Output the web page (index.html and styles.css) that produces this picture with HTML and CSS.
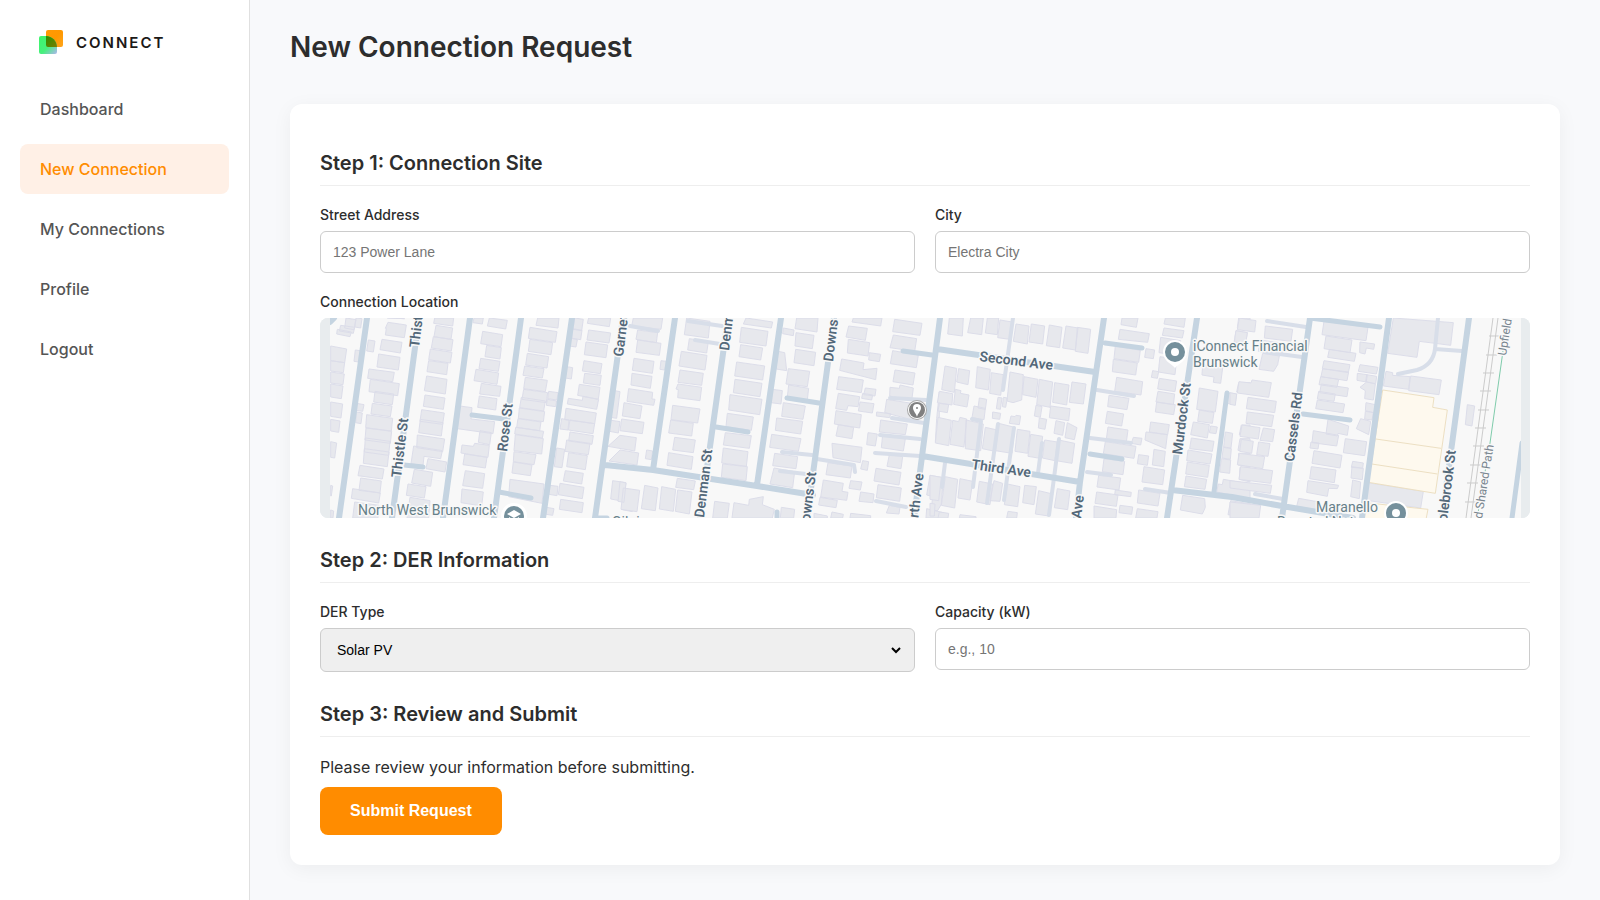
FILE: index.html
```html
<!DOCTYPE html>
<html lang="en">
<head>
<meta charset="utf-8">
<meta name="viewport" content="width=device-width, initial-scale=1">
<title>New Connection Request</title>
<link rel="stylesheet" href="styles.css">
</head>
<body>
<div class="layout">
  <aside class="sidebar">
    <a class="brand" href="#">
      <svg class="brand-mark" viewBox="0 0 24 24" aria-hidden="true">
        <defs>
          <linearGradient id="orange" x1="0" y1="0" x2="1" y2="1"><stop offset="0" stop-color="#ff9a05"/><stop offset=".5" stop-color="#ff9800"/><stop offset="1" stop-color="#ffa51c"/></linearGradient>
          <linearGradient id="green" x1="0" y1="0" x2="1" y2="1"><stop offset="0" stop-color="#3df56a"/><stop offset=".55" stop-color="#46f07c"/><stop offset="1" stop-color="#b0b5f0"/></linearGradient>
          <linearGradient id="overlap" x1="0" y1="0" x2="1" y2="1"><stop offset="0" stop-color="#2b8f00"/><stop offset="1" stop-color="#7a7d00"/></linearGradient>
        </defs>
        <rect x="7" y="0" width="17" height="17" rx="2" fill="url(#orange)"/>
        <path d="M2 6h5c6 0 11 5 11 11v5a2 2 0 0 1-2 2H2a2 2 0 0 1-2-2V8a2 2 0 0 1 2-2z" fill="url(#green)"/>
        <path d="M7 6c6 0 11 5 11 11H9a2 2 0 0 1-2-2z" fill="url(#overlap)"/>
      </svg>
      <span>CONNECT</span>
    </a>
    <nav class="nav">
      <a href="#">Dashboard</a>
      <a class="active" href="#" aria-current="page">New Connection</a>
      <a href="#">My Connections</a>
      <a href="#">Profile</a>
      <a href="#">Logout</a>
    </nav>
  </aside>

  <main class="main">
    <h1>New Connection Request</h1>
    <form class="card">
      <h2>Step 1: Connection Site</h2>
      <div class="row">
        <div class="field"><label for="street">Street Address</label><input id="street" type="text" placeholder="123 Power Lane"></div>
        <div class="field"><label for="city">City</label><input id="city" type="text" placeholder="Electra City"></div>
      </div>
      <div class="field location">
        <span class="label">Connection Location</span>
        <svg class="map" viewBox="0 0 1210 200" preserveAspectRatio="xMidYMid slice" role="img" aria-label="Map of the connection location">
          <rect class="edge" width="1210" height="200"/>
          <rect class="land" x="10" width="1191" height="200"/>

          <g class="building" transform="translate(-10 -8) scale(.33333)">
            <path d="M108 24l30 5-6 30-28-5zM138 24l18 2-4 28-18-3zM92 46l42 6-4 18-42-7zM82 58l42 8-4 14-40-8zM234 37l55 8-6 38-57-8 3-20h-3zM232 24l52 2zM216 88l60 9-5 32-61-10zM206 132l64 10-5 38-64-9zM175 90l20 3-5 33-20-3zM136 120l14 2-4 34-14-2zM62 108l48 9-6 41-42-6zM62 152l42 6-4 30-38-5zM62 186l41 6-4 32-37-5zM62 222l37 6-5 38-32-5zM62 276l36 6-5 42-31-5zM62 328l28 5-4 34-24-4zM62 395l18 4-6 45-12-2zM62 526l6 2-4 30h-2zM62 600l9 3-2 21h-7z"/>
            <path d="M177 177l76 10-5 28-75-10zM181 208l87 13-5 36-86-12zM195 244l56 8-4 32-56-8zM187 280l59 8-5 32-58-8zM170 314l78 11-4 38-77-10zM168 354l77 10-4 36-76-10zM166 384l74 10-4 42-73-10zM163 416l74 10-5 44-72-10zM150 466l72 11-5 30-73-10zM152 504l62 9-4 36-63-8zM128 536l83 13-5 30-82-14zM134 576l73 10-3 38h-76zM140 280l22 4-4 20-20-3zM139 306l18 3-4 32-16-3z"/>
            <path d="M374 24h57l-3 24-57-8zM378 46l50 8-5 34-51-8zM370 80l59 9-5 34-60-9zM361 117l65 10-5 32-65-10zM356 152l58 8-4 34-59-9zM350 198l61 10-5 44-63-10zM345 255l60 9-5 34-60-9zM335 299l68 10-5 34-68-9zM331 328l68 10-5 40-68-10zM322 375l82 12-6 38-78-12zM311 408l86 14-5 24-50-7-3 28-36-6zM354 446l56 10-5 30-57-10zM313 478l55 9-6 42-57-10zM294 522l54 8-5 34-54-8zM300 562l60 10-4 52h-65z"/>
            <path d="M492 24h28l-3 18-28-4zM538 24l54 7-5 26-55-9zM518 64l60 10-5 36-61-9zM530 106l44 7-4 34-45-7zM512 145l58 9-5 30-58-8zM498 178l68 11-5 34-69-11zM514 220l59 9-4 30-60-7zM508 258l53 8-4 34-54-8zM450 288l36 5-3 34 71 8-5 36-107-15zM510 362l34 6-5 36-34-7zM494 400l44 6-4 36-81-13 3-24 34 4zM464 432l67 10-5 32-67-10zM466 482l58 9-6 44-60-8zM456 537l64 9-5 42-62-10z"/>
            <path d="M683 24h64l-3 30-66-8zM660 52l81 13-5 32-81-12zM660 88l68 10-5 36-68-10zM652 130l64 10-5 34-64-9zM644 168l58 8-5 28-58-8zM646 202l66 9-6 34-65-9zM641 238l72 10-4 30-73-10zM634 262l72 11-5 30-72-10zM628 294l76 11-4 30-75-10zM624 326l69 10-4 26-69-10zM617 352l84 12-4 20-83-12zM616 374l84 12-5 46-83-10zM612 425l66 9-6 30-62-9zM610 456l56 9-5 32-55-8zM600 508l102 14-6 58-100-20zM794 24l26 4-5 34-26-4zM788 56l28 5-4 28-26-4zM780 84l22 5-4 22-20-3z"/>
            <path d="M716 244l28 4-3 22-28-4zM712 268l28 5-3 17-28-4zM836 24h66l-4 26-66-10zM836 60l66 9-5 30-66-9zM828 96l65 9-5 38-65-9zM822 152l54 9-5 30-54-8zM824 190l50 6-4 30-50-7zM808 223l62 9-5 36-62-12zM775 265l42 6 2-12 47 9-6 30-88-16zM768 295l91 14-5 32-90-12zM780 330l74 11-5 30-74-11zM780 366l70 11-4 26-70-10zM770 390l70 10-5 34-70-10zM776 428l56 9-6 42-56-9zM766 482l54 8-5 32-55-9zM750 520l72 12-5 34-72-12zM752 568l68 10-4 30-68-10zM770 170l18 3-4 34-18-3zM755 326l22 4-3 30-24-3zM740 414l24 4-8 55-23-3zM720 526l24 3-3 28-24-4zM710 592l22 4-4 20-20-3zM908 512l40 6-8 56-38-7zM940 542l35 8-8 55-30-6z"/>
          </g>

          <g class="building" transform="translate(300 -8) scale(.33333)">
            <path d="M40 24h88l-5 34-88-10zM53 60l60 8-4 30-61-10zM53 90l70 10-5 36-70-9zM42 145l60 9-5 36-60-9zM36 190l60 9-5 36-58-10zM26 236l72 11-2 20 9 1-4 18-80-12zM12 278l54 10-6 38-53-8zM5 327l67 10-5 34-67-9zM-28 240l28 5-10 80-24-4zM-32 330l32 5-5 34-32-6zM0 376l49 7-5 40-80-14zM0 420l56 9-5 36-84-12zM10 534l49 7-8 64-48-7zM0 515l18 4-6 58-18-3zM74 526l40 8-8 68-42-6zM125 530l42 8-7 66-42-7zM173 540l43 6-8 66-42-8zM172 505l54 8-5 26-54-7zM80 420l18 3-4 26-18-3zM123 152l16 2-5 26-14-2z"/>
            <path d="M200 24l70 10-5 50-72-10zM208 86l57 9-5 34-57-9zM184 124l77 12-6 44-78-12zM180 180l70 10-5 36-71-9zM174 222l71 10-5 40-67-9 2-24-7-2zM158 286l82 11-7 42-80-10zM152 330l68 10-5 38-69-9zM164 382l62 8-6 38-62-8zM146 428l73 12-5 38-73-12zM378 24l80 12-4 18-84-12zM364 52l80 12-6 44-79-11zM362 104l66 10-6 36-65-10zM350 156l84 12-6 42-84-12zM345 208l81 12-6 40-80-12zM330 254l96 14-7 46-93-14zM322 310l78 11-6 40-76-11zM316 368l78 9-6 38-78-10zM310 414l74 11-5 44-74-10zM308 462l74 8-4 42-74-10zM284 574l44 6-6 44h-44zM342 578l44 8 2-18 42-8-3 24 36 14-6 26H336z"/>
            <path d="M530 24h64l-3 42-66-10zM528 68l54 8-5 40-52-8zM527 118l60 9-5 40-60-9zM490 54l32 6-2 17-32-6zM474 124l20 4 6 54-32-5zM505 176l64 8-7 46-64-8zM506 225l60 10-4 34-60-8zM457 238l30 4-4 40-30-4zM490 278l66 10-7 40-64-9zM470 324l78 10-6 38-76-11zM455 373l88 13-8 38-86-12zM464 430l69 10-5 36-70-9zM462 474l62 11-6 48-68-11zM484 592l40 6-3 26h-40zM582 610l40 8v6h-40zM636 606l34 7-2 11h-36z"/>
            <path d="M700 24h86l-4 24-86-12zM686 48l56 7-6 36-58-10zM685 88l64 10-5 40-62-9zM748 128l34 5-4 22-32-5zM665 147l67 12-3 20 42-4-4 34-108-28zM656 200l74 10-6 38-74-10zM655 250l64 10-5 30-30-3-4 14-33-5zM736 234l32 4-3 20-34-4zM728 250l30 5-3 15-30-5zM720 276l42 5-5 28-42-6zM648 302l76 12-5 40-76-12zM655 344l46 8-5 34-48-8zM636 400l90 12-5 46-82-15zM624 458l72 10-5 36-73-10zM728 452l18 3-4 26-20-4zM744 368l28 4-6 36-26-4zM610 510l60 10-4 24 18 3-4 24-78-10zM600 562l52 9-4 22-52-8zM692 512l34 4-5 24-34-5zM722 546l40 6-3 26-42-4zM692 610l60 7v7h-62z"/>
            <path d="M824 28l82 12-6 36-82-11zM820 75l70 11-6 38-74-11zM818 122l77 13-6 38-78-12zM825 180l60 9-6 36-60-10zM810 232l28 3 2-10 40 9-5 38-66-14zM800 268l100 16-6 50-100-26zM782 330l80 12-6 32-78-8zM788 375l68 12-6 36-66-10zM808 434l40 6-5 36-42-7zM768 475l75 12-6 38-75-12zM774 524l70 10-5 40-70-11zM808 586l32 6-3 20-38-3zM930 496l40 7-6 80-12 20-18-4 4-40-18-4zM958 246v150h-12l4-70zM920 596l50 12v16h-52zM770 306l42 5-3 12-40-5z"/>
          </g>

          <g class="building" transform="translate(610 -8) scale(.33333)">
            <path d="M58 24h42l-3 54-44-6zM122 24h38l-5 50-42-6zM172 24h34l-4 50-36-5zM210 30l36 6-7 52-36-5zM258 42l39 6-5 54-42-8zM304 42l40 6-6 54-41-6zM358 45l38 7-7 61-40-6zM408 48l36 6-8 66-38-6zM442 52l40 6-8 72-38-6zM576 24h48l-5 28-46-8zM570 58l88 13-5 26-88-9zM556 108l75 13-5 36-74-11zM550 148l72 11-5 36-70-10zM560 202l78 13-5 40-79-11zM537 256l60 9-6 34-58-9zM532 304l49 8-6 36-49-8zM534 351l60 9-5 36-60-9zM526 395l92 14-6 36-92-14zM522 446l62 8-5 40-62-9zM506 496l66 8-5 36-66-9zM500 546l64 9-5 34-64-9zM492 588l68 11-2 25h-66zM556 540l48 7-2 13-48-6zM570 586l38 5-3 22-38-5zM622 596l62 9-3 19h-64z"/>
            <path d="M45 168l35 7-7 72-38-8zM86 176l33 6-5 42-34-8zM142 170l39 8-6 62-38-7zM184 188l36 6-8 62-33-6zM240 186l40 8-5 76-26 8-18-5zM282 200l42 8-6 54-40-8zM328 208l40 8-8 76-40-8zM374 218l43 7-7 60-42-8zM426 216l42 6-8 60-42-5zM28 244l40 7-2 34-44-7zM76 238l17 4-2 8 26 5-6 36-40-8zM28 280l28 4-4 24-28-5zM148 264l22 4-4 30-22-4zM132 288l34 7-4 34-36-6zM204 262l12 2-5 34-12-2zM220 262l12 2-5 28-10-2zM188 306l24 4-3 18-22-3zM258 316l14 2-4 26-30-4 5-22 12 2zM318 286l18 4-5 32-18-4zM328 324l22 4-5 30-20-4zM362 288l58 8-4 36-58-9zM378 332l26 6-6 38-26-6zM412 338l29 15-8 36-28-6z"/>
            <path d="M24 322l40 9-8 76-40-8zM90 322l20 5-8 84-42-8 8-72 18 4zM108 330l52 12-8 80-46-6zM166 352l36 8-7 64-38-8zM206 340l48 12-8 78-50-8zM262 358l38 6-7 66-38-6zM302 373l36 6-8 66-36-6zM344 390l38 6-7 56-38-8zM386 390l48 10-8 60-48-8zM0 496l34 6-8 70-26-4zM46 500l37 8-9 86-40-8zM90 506l38 8-8 56-36-6zM148 514l40 8-8 62-40-8zM192 512l26 8-8 54-30-2zM232 522l38 8-7 60-40-6zM284 526l35 4-7 54-34-6zM326 542l42 10-12 66-40-6zM382 536l38 7-7 56-40-6zM0 580l15 2-2 36H0zM28 606l28 4-2 14H24zM90 614l48 6v4H88zM234 604l28 4-2 16h-30z"/>
            <path d="M706 24h60l-4 28-60-10zM702 54l60 8-5 22-60-8zM692 82l60 10-5 44-60-8zM690 140l50 8-5 46-50-8zM648 116l26 4-4 26-26-4zM668 182l18 3-4 20-18-3zM688 205l52 8-5 32-52-8zM684 244l50 8-4 32-52-8zM680 276l56 8-5 30-55-8zM662 336l56 8-5 30-55-8zM648 366l64 8-5 42-62-26zM610 382l26 3-4 20-28-5zM672 418l34 6-5 46-34-5zM626 434l30 4-4 28-30-5zM642 470l62 10-6 44-62-8zM626 540l64 10-6 38-62-9zM926 24h34v36l-38-6zM918 62l34 6-6 36-34-5zM808 234l56 10-8 62-56-8zM808 300l44 8-5 32-44-6zM790 336l48 8-6 40-50-10zM842 348l20 3-4 20-20-3zM784 384l68 10-5 30-68-8zM774 420l72 12-6 30-70-10zM772 456l66 10-5 36-66-10zM768 498l62 10-5 30-62-8zM758 556l66 10 2 26-9 20-66-12zM886 366l22 4-5 44-22-3zM880 412l24 4-3 32-25-4zM874 446l28 4-3 40-30-4zM880 508l80 14v44l-100-20 5-24 12 2zM902 572l60 10v42l-68-10zM926 218h34v34l-40-6zM892 248l28 4-5 32-26-4zM818 164l60 10-6 46-22-3 2-16-36-6zM934 345h26v34l-32-5zM930 386h30v40l-36-5zM926 430h34v40l-36-5zM930 472h30v44l-32-8z"/>
          </g>

          <g class="building" transform="translate(910 -8) scale(.33333)">
            <path d="M28 24l50 8-4 34-52-7zM18 62l34 6-5 34-34-6zM106 48l82 10-5 36-80-10zM90 90l70 10-5 34-70-10zM98 130l50 8-5 26-12 20-44-6zM66 210l58 8-8 44-94-13 5-34 36 4zM0 248l20 4-4 34-16-3zM54 262l85 12-5 34-85-12zM52 306l79 10-6 34-77-10zM36 345l54 8-5 34-55-8zM100 354l34 5-6 36-38-4zM34 388l36 6-5 36-36-6zM86 396l34 5-6 38-34-5zM28 430l76 10-6 36-76-12zM32 470l96 12-6 38-95-12zM0 512l125 14-4 24-121-16zM0 576l92 10-5 38H0zM206 565l56 10-4 24-58-10z"/>
            <path d="M282 34l132 18-6 40-132-18zM288 78l78 12-6 38-78-12zM298 118l80 12-5 24-80-12zM282 152l78 12-5 24-78-12zM278 176l78 10-5 26-78-12zM272 200l54 8-5 24-54-8zM274 222l81 12-4 26-82-12zM266 244l50 8-4 22-50-7zM262 270l82 12-5 26-82-12zM294 328l62 20-4 28-28-6-2 8-34-6zM250 362l76 14-6 32-74-10zM243 396l24 3-3 18-24-3zM252 422l84 14-6 38-84-14zM244 470l74 10-5 38-74-12zM234 512l92 14-4 10-26-1-4 24-62-12zM346 386l64 9-6 42-64-9zM368 454l32 5-2 16-34-3zM366 470l34 5-3 34-34-5zM368 510l24 6-4 50-26-6zM390 96l44 6-3 16-22-4-4 18-16-4zM390 164l54 8-5 20-54-8zM382 190l30 4-3 22-28-5zM410 194l30 5-3 22-30-6zM410 216l26 6-6 48-26-4 2-24-16-10zM408 278l28 6-4 24-26-6zM406 304l24 4-4 22-22-3zM392 326l30 8-6 40-37-18z"/>
            <path d="M490 24l180 14-8 68-94-12-7 48-88-12zM468 184l20 4v8l52 4-4 38-76-10zM542 198l92 12-7 44-91-12zM712 284l22 4-8 60-20-4zM412 518l168 26-8 50-170-24z"/>
          </g>

          <g class="plots" transform="translate(910 -8) scale(.33333)">
            <path d="M458 240l154 23-4 29 44 8-36 250-201-33zM437 387l196 28M425 462l197 30M406 578l188 20-6 30H398z"/>
          </g>

          <g class="lane">
            <path d="M310 8l28 5M368 3l34 5M375 22l25 4M497 141l37 6 1 7M462 134l30 3M460 153l26 3M570 80l36 2M560 117l40 4M555 135l45 3M572 100l32 5M556 183l30 6"/>
            <path d="M693 0l-10 72M652 101l9 2-8 66M678 106l-11 79M694 110l-10 72M722 125l-4 30M739 121l-5 39-5 37M625 145l-3 24M770 120l41 5M767 154l24 3M777 72l37 6M947 3l39 6M945 34l37 5M825 171l26 4"/>
            <path d="M1142 33l-27-2q-2 16-18 21l-19 4M1115 31l3-31M935 176l28 5"/>
          </g>
          <g class="street">
            <path d="M47 0L19 200M99 0L72 200M150 0L123 200M201 0L174 200M252 0L223 200M303 0L275 200M355 0l-22 152M408 0l-28 200M461 0l-24 167M514 0l-27 200M620 0l-26 200M784 0l-24 164-4 36M877 0l-30 200M990 0l-28 200M1069 0l-27 200M1149 0l-27 200M285 147l48 5 104 16 56 9M617 31l158 23M602 138l158 26M852 172l60 7 50 9 71 12M10 4l4-4"/>
          </g>
          <g class="street side">
            <path d="M152 97l32 4M84 147l19 2M179 174l32 6M396 109l32 5M467 80l32 5M583 33l29 4M785 25l37 5M770 136l32 5M907 75l-13 99M990 0l70 9M983 96l47 6M457 194v6M1202 125l-10 75M275 200h12"/>
          </g>
          <g class="rail">
            <path d="M1173 0l-27 200M1178 0l-27 200M1169 18h11M1166 37h11M1163 55h11M1160 73h11M1158 92h11M1155 110h11M1153 128h11M1150 147h11M1147 165h11M1145 184h11"/>
          </g>
          <path class="trail" d="M1183 33l-13 92-12 70"/>
          <path class="edge" d="M0 0h10v200H0zM1201 0h9v200h-9z"/>

          <g class="street-name">
            <text transform="translate(99 30) rotate(-83)">Thistle St</text>
            <text transform="translate(81 160) rotate(-83)">Thistle St</text>
            <text transform="translate(187 134) rotate(-83)">Rose St</text>
            <text transform="translate(303 39) rotate(-83)">Garnet St</text>
            <text transform="translate(409 33) rotate(-83)">Denman St</text>
            <text transform="translate(384 200) rotate(-83)">Denman St</text>
            <text transform="translate(513 44) rotate(-83)">Downs St</text>
            <text transform="translate(489 213) rotate(-83)">Downs St</text>
            <text transform="translate(596 218) rotate(-83)">North Ave</text>
            <text transform="translate(761 201) rotate(-83)">Ave</text>
            <text transform="translate(659 43) rotate(7)">Second Ave</text>
            <text transform="translate(651 151) rotate(8)">Third Ave</text>
            <text transform="translate(862 137) rotate(-83)">Murdock St</text>
            <text transform="translate(974 144) rotate(-83)">Cassels Rd</text>
            <text transform="translate(1126 213) rotate(-83)">Colebrook St</text>
          </g>
          <g class="trail-name">
            <text transform="translate(1186 38) rotate(-81)">Upfield</text>
            <text transform="translate(1162 201) rotate(-81)">d Shared Path</text>
          </g>
          <g class="place-name">
            <text x="38" y="197">North West Brunswick</text>
            <text x="873" y="33">iConnect Financial</text>
            <text x="873" y="49">Brunswick</text>
            <text x="996" y="194">Maranello</text>
            <text x="957" y="209">Roasted Nuts</text>
            <text x="292" y="209">Gilpin</text>
          </g>

          <g class="pins">
            <circle class="pin-ring" cx="194" cy="198" r="13"/><circle class="pin-fill" cx="194" cy="198" r="10"/>
            <path class="pin-ring" d="M187 196l7-4 7 4-7 4zM189 199l5 3 5-3v6h-10z"/>
            <path class="pin-ring" d="M855 50c-3-4-12-7-12-16a12 12 0 0 1 24 0c0 9-9 12-12 16z"/><circle class="pin-fill" cx="855" cy="34" r="10"/><circle class="pin-ring" cx="855" cy="34" r="4"/>
            <circle class="pin-ring" cx="1076" cy="195" r="12"/><circle class="pin-fill" cx="1076" cy="195" r="10"/><circle class="pin-ring" cx="1076" cy="195" r="4"/>
            <circle class="site-edge" cx="597" cy="92" r="10"/><circle class="site-ring" cx="597" cy="92" r="9"/><circle class="site-fill" cx="597" cy="92" r="8"/>
            <path class="pin-ring" d="M597 99c-1-4-4-6-4-9a4 4 0 0 1 8 0c0 3-3 5-4 9z"/><circle class="site-fill" cx="597" cy="90" r="1"/>
          </g>
        </svg>
      </div>

      <h2>Step 2: DER Information</h2>
      <div class="row">
        <div class="field">
          <label for="der">DER Type</label>
          <div class="select">
            <select id="der"><option>Solar PV</option></select>
            <svg class="chevron" viewBox="0 0 10 8" aria-hidden="true"><path d="M1 2l4 4 4-4"/></svg>
          </div>
        </div>
        <div class="field"><label for="capacity">Capacity (kW)</label><input id="capacity" type="text" placeholder="e.g., 10"></div>
      </div>

      <h2>Step 3: Review and Submit</h2>
      <p>Please review your information before submitting.</p>
      <button type="submit">Submit Request</button>
    </form>
  </main>
</div>
</body>
</html>
```
FILE: styles.css
```css
* { box-sizing: border-box; }

body {
  margin: 0;
  background: #f8f9fb;
  color: #2d2d2d;
  font-family: Inter, "Liberation Sans", sans-serif;
}

.layout { display: flex; min-height: 100vh; }

.sidebar {
  flex: 0 0 250px;
  padding: 28px 20px;
  background: #fff;
  border-right: 1px solid #e0e0e0;
}

.brand {
  display: flex;
  align-items: center;
  gap: 13px;
  height: 28px;
  margin-bottom: 28px;
  padding-left: 19px;
  color: #1c1917;
  font-size: 15px;
  font-weight: 600;
  letter-spacing: 2px;
  text-decoration: none;
}
.brand-mark { width: 24px; height: 24px; }

.nav { display: flex; flex-direction: column; gap: 10px; }
.nav a {
  padding: 14px 20px;
  border-radius: 8px;
  color: #555;
  font-size: 16px;
  font-weight: 500;
  line-height: 22px;
  text-decoration: none;
}
.nav .active { background: #fff0e6; color: #ff8c00; }

.main { flex: 1; min-width: 0; padding: 28px 40px 35px; }

h1 { margin: 0 0 38px; font-size: 28px; font-weight: 600; line-height: 38px; }

.card {
  padding: 46px 30px 30px;
  background: #fff;
  border-radius: 12px;
  box-shadow: 0 4px 20px rgba(0, 0, 0, .05);
}

h2 {
  margin: 0 0 20px;
  padding-bottom: 9px;
  border-bottom: 1px solid #eee;
  font-size: 20px;
  font-weight: 600;
  line-height: 26px;
}
.row + h2, .location + h2 { margin-top: 29px; }

.row { display: grid; grid-template-columns: 1fr 1fr; align-items: start; gap: 20px; }
.field { display: flex; flex-direction: column; gap: 7px; }
.location { margin-top: 20px; }
label, .label { font-size: 14px; font-weight: 500; line-height: 18px; }

input, select {
  display: block;
  width: 100%;
  padding: 12px;
  border: 1px solid #ccc;
  border-radius: 6px;
  font-family: "Liberation Sans", Arial, sans-serif;
  font-size: 14px;
}
input { height: 42px; background: #fff; }
input::placeholder { color: #757575; }
.select { position: relative; }
select {
  appearance: none;
  height: 44px;
  padding: 0 32px 0 16px;
  background: #efefef;
  color: #000;
}
.chevron {
  position: absolute;
  top: 18px;
  right: 14px;
  width: 10px;
  height: 8px;
  fill: none;
  stroke: #000;
  stroke-width: 2;
  pointer-events: none;
}

p { margin: 0 0 10px; font-size: 16px; line-height: 20px; }

button {
  height: 48px;
  padding: 0 30px;
  border: 0;
  border-radius: 8px;
  background: #ff8c00;
  color: #fff;
  font-family: "Liberation Sans", Arial, sans-serif;
  font-size: 16px;
  font-weight: 700;
}

.map { display: block; width: 100%; height: 200px; border-radius: 8px; }
.edge { fill: #e8ecee; }
.land { fill: #f8f8f8; }
.building { fill: #e7e8ed; stroke: #dcdde9; stroke-width: 3; }
.plots { fill: #fef9ee; stroke: #ecdfc2; stroke-width: 3; }
.lane, .street { fill: none; stroke-linejoin: round; stroke-linecap: round; }
.lane { stroke: #d8dee9; stroke-width: 4; }
.street { stroke: #c5d4e1; stroke-width: 6; }
.side { stroke-width: 5; }
.rail { fill: none; stroke: #cbcbcb; stroke-width: 1; }
.trail { fill: none; stroke: #7fcbab; stroke-width: 1; }

.map text { font-family: Roboto, sans-serif; paint-order: stroke; stroke: #f8f8f8; stroke-width: 3px; stroke-linejoin: round; }
.street-name { fill: #53687a; font-size: 14px; font-weight: 600; }
.trail-name { fill: #78858f; font-size: 12px; }
.place-name { fill: #668089; font-size: 14px; }
.pin-ring { fill: #fff; }
.pin-fill { fill: #75909c; }
.site-edge { fill: #aaa; }
.site-ring { fill: #fff; }
.site-fill { fill: #808080; }
```
